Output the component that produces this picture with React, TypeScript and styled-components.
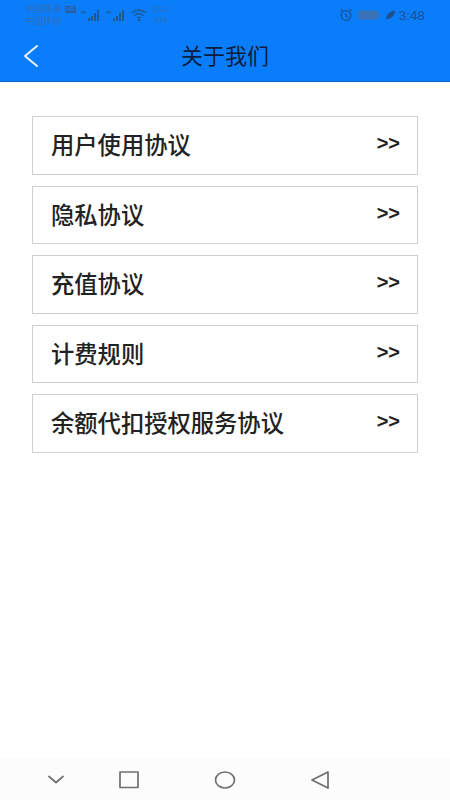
import React from "react";
import styled, { createGlobalStyle } from "styled-components";

const Global = createGlobalStyle`
  html, body { margin: 0; padding: 0; background: #fff; }
  * { box-sizing: border-box; }
`;

const Page = styled.div`
  width: 450px;
  height: 800px;
  display: flex;
  flex-direction: column;
  background: #fff;
  font-family: "Noto Sans CJK SC", "Liberation Sans", sans-serif;
  overflow: hidden;
`;

const Header = styled.header`
  height: 82px;
  flex: none;
  background: #0a7dfb;
  border-bottom: 1px solid #0b66c8;
  display: flex;
  flex-direction: column;
`;

const StatusBar = styled.div`
  height: 27px;
  flex: none;
  display: flex;
  align-items: center;
  justify-content: space-between;
  padding: 3px 25px 0 25px;
`;

const StatusGroup = styled.div`
  display: flex;
  align-items: center;
`;

const Carriers = styled.div`
  display: flex;
  flex-direction: column;
  font-size: 9px;
  line-height: 12px;
  width: 40px;
  color: #2f6fb8;
  white-space: nowrap;
`;

const HdBadge = styled.span`
  font-family: "Liberation Sans", sans-serif;
  font-size: 6px;
  font-weight: 700;
  line-height: 7px;
  width: 11px;
  text-align: center;
  background: #2a5f9f;
  color: #0a7dfb;
  border-radius: 1px;
  margin-bottom: 11px;
`;

const SignalIcon = styled.svg`
  margin-left: 4px;
  fill: #22588f;
`;

const Speed = styled.div`
  font-family: "Liberation Sans", sans-serif;
  font-size: 9px;
  line-height: 11px;
  text-align: center;
  margin-left: 4px;
  color: #2f6fb8;
`;

const Clock = styled.span`
  font-family: "Liberation Sans", sans-serif;
  font-size: 13.500px;
  color: #22508f;
  margin-left: 3px;
`;

const NavBar = styled.div`
  flex: 1;
  display: flex;
  align-items: center;
  padding: 4px 0 0 23px;
`;

const NavTitle = styled.h1`
  margin: 0 0 4px 127px;
  width: 118px;
  text-align: center;
  font-size: 22px;
  line-height: 28px;
  font-weight: 400;
  color: #0d1e3c;
`;

const List = styled.ul`
  list-style: none;
  margin: 0;
  padding: 34px 32px 0 32px;
  display: flex;
  flex-direction: column;
  gap: 11px;
  flex: 1;
`;

const Row = styled.li`
  height: 58.500px;
  border: 1px solid #cfcfcf;
  display: flex;
  justify-content: space-between;
  padding: 0 17px 0 18px;
`;

const RowLabel = styled.span`
  font-size: 23.300px;
  line-height: 55px;
  font-weight: 500;
  color: #222;
`;

const Arrow = styled.span`
  font-family: "Liberation Sans", sans-serif;
  font-size: 20px;
  line-height: 52px;
  font-weight: 700;
  color: #222;
`;

const BottomNav = styled.nav`
  height: 42px;
  flex: none;
  background: #fcfcfc;
  display: flex;
  align-items: center;
  padding-top: 1px;
`;

const NavIcon = styled.svg<{ $left: number }>`
  margin-left: ${(p) => p.$left}px;
  flex: none;
  fill: none;
  stroke: #6f6f6f;
  stroke-width: 1.700;
  stroke-linejoin: round;
  stroke-linecap: round;
`;

const items = ["用户使用协议", "隐私协议", "充值协议", "计费规则", "余额代扣授权服务协议"];

const Bars = () => (
  <SignalIcon width="21" height="14" viewBox="0 0 21 14">
    <rect x="8" y="10" width="2" height="3" />
    <rect x="11" y="8" width="2" height="5" />
    <rect x="14" y="5" width="2" height="8" />
    <rect x="17" y="2" width="2" height="11" />
    <rect x="1" y="3" width="5" height="2.400" opacity="0.6" />
  </SignalIcon>
);

export default function App() {
  return (
    <Page>
      <Global />
      <Header>
        <StatusBar>
          <StatusGroup>
            <Carriers>
              <span>中国联通</span>
              <span>中国移动</span>
            </Carriers>
            <HdBadge>HD</HdBadge>
            <Bars />
            <Bars />
            <svg width="18" height="14" viewBox="0 0 18 14" fill="none" stroke="#22588f" strokeWidth="1.300" style={{ marginLeft: 4 }}>
              <path d="M2 5c4-4 10-4 14 0M4.500 7.500c3-2.600 6-2.600 9 0M7 10c1.300-1.200 2.700-1.200 4 0" />
              <circle cx="9" cy="12" r="0.700" fill="#22588f" />
            </svg>
            <Speed>
              15.2
              <br />
              K/s
            </Speed>
          </StatusGroup>
          <StatusGroup>
            <svg width="14" height="14" viewBox="0 0 14 14" fill="none" stroke="#22508f" strokeWidth="1.300">
              <circle cx="7" cy="7.500" r="4.800" />
              <path d="M7 5v2.800l2 1M1.500 3L3.500 1.300M12.500 3L10.500 1.300" />
            </svg>
            <svg width="22" height="10" viewBox="0 0 22 10" style={{ marginLeft: 5 }}>
              <rect x="0" y="0.500" width="20" height="9" rx="1" fill="#3a72b8" />
              <rect x="20.500" y="3" width="1.500" height="4" fill="#3a72b8" />
            </svg>
            <svg width="12" height="12" viewBox="0 0 12 12" fill="#22508f" style={{ marginLeft: 4 }}>
              <path d="M2 11C2 5 6 2 11 1.500 11 7 7 10 3.500 9.500Z" />
            </svg>
            <Clock>3:48</Clock>
          </StatusGroup>
        </StatusBar>
        <NavBar>
          <svg width="16" height="24" viewBox="0 0 16 24" fill="none" stroke="#f2f8ff" strokeWidth="1.800" strokeLinecap="round" strokeLinejoin="round">
            <path d="M14 2L2 12l12 10" />
          </svg>
          <NavTitle>关于我们</NavTitle>
        </NavBar>
      </Header>
      <List>
        {items.map((t) => (
          <Row key={t}>
            <RowLabel>{t}</RowLabel>
            <Arrow>&gt;&gt;</Arrow>
          </Row>
        ))}
      </List>
      <BottomNav>
        <NavIcon $left={48} width="16" height="10" viewBox="0 0 16 10">
          <path d="M1 1.500l7 6 7-6" />
        </NavIcon>
        <NavIcon $left={55} width="20" height="18" viewBox="0 0 20 18">
          <rect x="1" y="1" width="18" height="15.500" />
        </NavIcon>
        <NavIcon $left={75} width="22" height="18" viewBox="0 0 22 18">
          <ellipse cx="11" cy="9" rx="9.500" ry="8" />
        </NavIcon>
        <NavIcon $left={74} width="20" height="18" viewBox="0 0 20 18">
          <path d="M18 1L2 9l16 8z" />
        </NavIcon>
      </BottomNav>
    </Page>
  );
}
